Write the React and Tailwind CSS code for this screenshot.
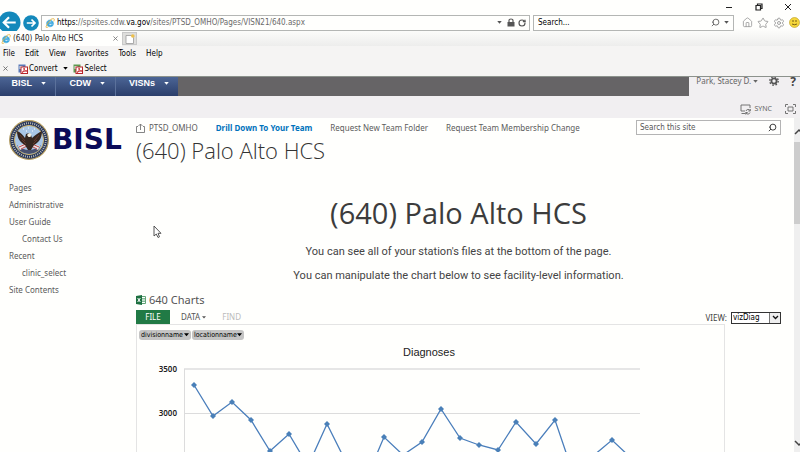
import React from 'react';
import { Home, Star, Settings, Lock, RotateCw, Search } from 'lucide-react';

function IELogo({ className }) {
  return (
    <svg viewBox="0 0 16 16" className={className} aria-hidden="true">
      <path d="M13.800 9.200H6c.2 2.600 3.600 3.200 4.600 1.300h3C11.500 16 2.500 15 2.500 8.500S12.500.5 13.800 9.200zM6 7.200h4.700C10.400 4.600 6.400 4.600 6 7.200z" fill="#35a5de" fillRule="evenodd" stroke="#35a5de" strokeWidth="0.800" />
      <path d="M3 11C0 16 2.500 16 5.500 14M9 2.500C13 .2 16.500 0 14 5.500M3 11Q4.500 6.500 10 2.500" fill="none" stroke="#e6b23c" strokeWidth="1.400" />
    </svg>
  );
}

function PdfIcon({ green }) {
  return (
    <svg viewBox="0 0 10 10" className="size-[10px] shrink-0" aria-hidden="true">
      <rect x="0.5" y="0.5" width="7" height="8" fill={green ? '#5c9a50' : '#5a78b8'} />
      <rect x="1.500" y="2" width="3" height="3" fill="#e8ece8" />
      <rect x="3" y="3" width="6.500" height="6.500" fill="#fff" stroke="#b8252c" />
      <path d="M4 8.500c2-1 2.500-3 2-4.500c0 2 1 3 3 3c-2 0-4 .5-5 1.500z" fill="none" stroke="#c4252c" strokeWidth="0.900" />
    </svg>
  );
}

function Caret({ className }) {
  return (
    <svg viewBox="0 0 6 4" className={className} aria-hidden="true">
      <path d="M0 0h6L3 3.500z" fill="currentColor" />
    </svg>
  );
}

function BrowserChrome() {
  return (
    <header className="shrink-0 border-b border-[#8c928c] bg-[#f5f4f3] font-['DejaVu_Sans_Condensed',sans-serif] text-black">
      <div className="bg-gradient-to-b from-[#fffffd] from-60% to-[#ededec]">
        <div className="flex h-[14px] items-center justify-end gap-[21px] pr-[8px]">
          <button aria-label="Minimize" className="flex size-[8px] items-center">
            <span className="h-px w-[6px] bg-[#222]" />
          </button>
          <button aria-label="Restore">
            <svg viewBox="0 0 8 8" className="size-[8px]" fill="none" stroke="#222" strokeWidth="1.200">
              <path d="M1 2.500h4.500V7H1zM2.500 2.500V1H7v4.500H5.500" />
            </svg>
          </button>
          <button aria-label="Close">
            <svg viewBox="0 0 8 8" className="size-[8px]" fill="none" stroke="#222">
              <path d="M1 1l6 6M7 1L1 7" />
            </svg>
          </button>
        </div>
        <div className="flex h-[17px] items-center">
          <button aria-label="Back" className="-ml-[2px] shrink-0">
            <svg viewBox="0 0 24 24" className="size-[23px]">
              <circle cx="12" cy="12" r="11.500" fill="#1489bb" />
              <path d="M18.500 12H6.500M11.500 6.500L6 12l5.500 5.500" fill="none" stroke="#fff" strokeWidth="2.300" />
            </svg>
          </button>
          <button aria-label="Forward" className="ml-[2px] shrink-0">
            <svg viewBox="0 0 16 16" className="size-[16px]">
              <circle cx="8" cy="8" r="7.800" fill="#1489bb" />
              <path d="M3.800 8h8M8.500 4.500L12 8l-3.500 3.500" fill="none" stroke="#fff" strokeWidth="1.700" />
            </svg>
          </button>
          <div className="ml-[2px] flex h-[16px] min-w-0 flex-1 items-center border border-[#b4b6b4] bg-[#fffffd] px-[3px]">
            <IELogo className="size-[10px] shrink-0" />
            <div className="ml-[2px] flex-1 truncate text-[8px] text-[#6a6a6a]">
              <span className="text-black">https:</span>//spsites.cdw.<span className="text-black">va.gov</span>/sites/PTSD_OMHO/Pages/VISN21/640.aspx
            </div>
            <div className="flex items-center gap-[3px] text-[#555]">
              <Caret className="mr-[2px] h-[3px] w-[5px]" />
              <svg viewBox="0 0 8 9" className="h-[9px] w-[8px]" aria-hidden="true">
                <rect x="0.500" y="4" width="7" height="4.500" fill="currentColor" />
                <path d="M2 4V2.500Q2 1 4 1T6 2.500V4" fill="none" stroke="currentColor" strokeWidth="1.200" />
              </svg>
              <RotateCw className="size-[8px]" strokeWidth={3.5} />
            </div>
          </div>
          <div className="ml-[3px] flex h-[16px] w-[201px] shrink-0 items-center border border-[#b4b6b4] bg-[#fffffd] px-[4px]">
            <input aria-label="Web search" placeholder="Search..." className="w-0 flex-1 bg-transparent text-[8px] outline-none placeholder:text-black" />
            <Search className="size-[9px] -scale-x-100 text-[#444]" />
            <Caret className="ml-[4px] h-[3px] w-[5px] text-[#555]" />
          </div>
          <div className="flex shrink-0 items-center gap-[4px] pl-[8px] text-[#999]">
            <Home className="size-[11px]" strokeWidth={1.8} />
            <Star className="size-[12px]" strokeWidth={1.8} />
            <Settings className="size-[12px]" strokeWidth={1.8} />
            <svg viewBox="0 0 11 11" className="size-[11px]">
              <circle cx="5.500" cy="5.500" r="5" fill="#f5d63a" stroke="#b89a20" strokeWidth="0.600" />
              <path d="M4 3v2M7 3v2M3 7q2.500 1.500 5 0" stroke="#6b5410" fill="none" strokeWidth="0.900" />
            </svg>
          </div>
        </div>
        <div className="flex h-[15px] items-stretch">
          <div className="flex w-[122px] items-center bg-[#fffffd] pr-[4px] pl-[1px]">
            <IELogo className="size-[10px]" />
            <span className="ml-[2px] flex-1 text-[8px] whitespace-nowrap text-[#222]">(640) Palo Alto HCS</span>
            <button aria-label="Close tab">
              <svg viewBox="0 0 6 6" className="size-[5px]" stroke="#777">
                <path d="M0.500 0.500l5 5M5.500 0.500l-5 5" />
              </svg>
            </button>
          </div>
          <button aria-label="New tab" className="my-[1px] flex w-[15px] items-center justify-center border border-[#c8c8c8] bg-[#dededc]">
            <svg viewBox="0 0 10 10" className="size-[10px]">
              <path d="M1 1.500h5.500l2 2V9.500H1z" fill="#fff" stroke="#999" strokeWidth="0.800" />
              <circle cx="7.800" cy="2" r="1.800" fill="#edc04c" />
            </svg>
          </button>
        </div>
      </div>
      <nav className="flex h-[15px] items-center gap-[10px] px-[3px] text-[8px]">
        <button>File</button>
        <button>Edit</button>
        <button>View</button>
        <button>Favorites</button>
        <button>Tools</button>
        <button>Help</button>
      </nav>
      <div className="flex h-[15px] items-center px-[3px] text-[8px]">
        <button aria-label="Close toolbar">
          <svg viewBox="0 0 6 6" className="size-[5px]" stroke="#666">
            <path d="M0.500 0.500l5 5M5.500 0.500l-5 5" />
          </svg>
        </button>
        <button className="ml-[10px] flex items-center gap-[1px]"><PdfIcon />Convert</button>
        <Caret className="ml-[6px] h-[3px] w-[5px]" />
        <button className="ml-[5px] flex items-center gap-[1px]"><PdfIcon green />Select</button>
      </div>
    </header>
  );
}

function Ribbon() {
  return (
    <div className="shrink-0 bg-[#f1eff1]">
      <div className="flex h-[19px] items-stretch">
        <nav className="flex bg-gradient-to-b from-[#4c6595] to-[#2b3e6b] font-['Liberation_Sans',sans-serif] text-[9px] font-bold text-white">
          <button className="flex w-[56px] items-start justify-end gap-[9px] border-r border-[#5b719b] pr-[9px]">BISL<Caret className="mt-[5px] h-[3px] w-[5px]" /></button>
          <button className="flex w-[60px] items-start justify-end gap-[9px] border-r border-[#5b719b] pr-[10px]">CDW<Caret className="mt-[5px] h-[3px] w-[5px]" /></button>
          <button className="flex w-[62px] items-start justify-end gap-[9px] pr-[9px]">VISNs<Caret className="mt-[5px] h-[3px] w-[5px]" /></button>
        </nav>
        <div className="flex-1 bg-[#666466]" />
        <div className="flex shrink-0 items-start gap-[11px] pr-[4px] pl-[7px] text-[#666]">
          <button className="flex h-[8px] items-center gap-[2px] text-[8px] leading-[8px] whitespace-nowrap">Park, Stacey D.<Caret className="h-[3px] w-[5px]" /></button>
          <button aria-label="Settings">
            <svg viewBox="0 0 10 10" className="size-[10px]" fill="none" stroke="#555">
              <circle cx="5" cy="4" r="2.600" strokeWidth="1.800" />
              <circle cx="5" cy="4" r="4.200" strokeWidth="1.400" strokeDasharray="1.650 1.650" />
            </svg>
          </button>
          <button className="text-[12px] leading-[9px] font-bold text-[#444]">?</button>
        </div>
      </div>
      <div className="flex h-[22px] items-center justify-end gap-[13px] pt-[4px] pr-[4px] text-[#666]">
        <button className="flex items-center gap-[3px] text-[7px]">
          <svg viewBox="0 0 11 11" className="size-[11px]" fill="none" stroke="currentColor" strokeWidth="0.900">
            <path d="M5 7H1V1h9v3M1.500 9.500H5" />
            <path d="M10 6.500a2.200 2.200 0 0 0-4 .5M6 9a2.200 2.200 0 0 0 4-.500M10.300 5v2h-2M5.700 10.500v-2h2" />
          </svg>
          SYNC
        </button>
        <button aria-label="Focus on content">
          <svg viewBox="0 0 11 10" className="h-[10px] w-[11px]" fill="none" stroke="currentColor" strokeWidth="0.900">
            <path d="M0.500 3V0.500H3M8 0.500h2.500V3M10.500 7v2.500H8M3 9.500H0.500V7M3 3h5v4H3z" />
          </svg>
        </button>
      </div>
    </div>
  );
}

function Seal() {
  return (
    <svg viewBox="0 0 40 40" className="size-[40px] shrink-0" role="img" aria-label="Department seal">
      <circle cx="20" cy="20" r="19.300" fill="#26345a" stroke="#b29a5c" strokeWidth="1.200" />
      <circle cx="20" cy="20" r="16.800" fill="none" stroke="#b4b8b4" strokeWidth="2" strokeDasharray="1 1.100" />
      <circle cx="20" cy="20" r="14.600" fill="#a9c6e6" stroke="#c9b06a" strokeWidth="1" />
      <path d="M8 25q12 10 24 0l-3 6q-9 6-18 0z" fill="#48506f" />
      <path d="M9 26l8-3 2 3-8 4zM31 26l-8-3-2 3 8 4z" fill="#e9e3e3" />
      <path d="M10 27l7-3M12 29l6-3M30 27l-7-3M28 29l-6-3" stroke="#b5343b" strokeWidth="0.900" />
      <path d="M8 11c0 8 4 12 8 14l3 5h3l3-5c4-2 8-6 8-14-4 2-7 4-10 7l-1-3-2-2-3 1-1 4c-2-3-5-6-8-7z" fill="#352620" />
      <path d="M11 15l5 6M30 15l-5 6M13 20l4 4M28 20l-4 4" stroke="#6e3a2c" strokeWidth="0.900" />
      <path d="M18 15l2-2 2.500 1-1 3h-2z" fill="#f2eee0" />
      <path d="M14 9h1M19 8h1M25 9h1M17 11h1M23 11h1" stroke="#fff" />
    </svg>
  );
}

const sideLinks = [
  { label: 'Pages' },
  { label: 'Administrative' },
  { label: 'User Guide' },
  { label: 'Contact Us', nested: true },
  { label: 'Recent' },
  { label: 'clinic_select', nested: true },
  { label: 'Site Contents' },
];

function Sidebar() {
  return (
    <aside className="w-[136px] shrink-0 pl-[9px]">
      <div className="flex items-center gap-[3px] pt-[2px]">
        <Seal />
        <span className="font-['DejaVu_Sans',sans-serif] text-[28px] leading-[40px] font-bold text-[#0b0b58]">BISL</span>
      </div>
      <nav className="mt-[19px] flex flex-col text-[8px] leading-[17px] text-[#5c5c5c]">
        {sideLinks.map((l) => (
          <a key={l.label} href="#" className={l.nested ? 'pl-[13px]' : ''}>{l.label}</a>
        ))}
      </nav>
    </aside>
  );
}

const points = [
  [58, 61], [77, 92], [96, 78], [115, 96], [134, 127], [153, 110], [172, 142], [191, 100],
  [210, 138], [229, 158], [248, 113], [267, 131], [286, 118], [305, 85], [324, 114], [343, 121],
  [362, 126], [380, 98], [400, 120], [419, 96], [438, 152], [457, 132], [476, 116], [495, 134],
];

function Chart() {
  return (
    <svg width="586" height="144" viewBox="1 16 586 144" className="block" role="img" aria-label="Diagnoses line chart">
      <text x="293" y="32" textAnchor="middle" className="fill-[#222] font-['Liberation_Sans',sans-serif] text-[11px]">Diagnoses</text>
      <g textAnchor="end" className="fill-[#222] font-['Noto_Sans',sans-serif] text-[8px] font-semibold">
        <text x="41" y="48">3500</text>
        <text x="41" y="92">3000</text>
      </g>
      <path d="M48 45H504" stroke="#e6e6e6" strokeWidth="2" />
      <path d="M48 89.500H504M48.500 45V160" stroke="#dcdcdc" />
      <polyline points={points.map((p) => p.join(',')).join(' ')} fill="none" stroke="#4a7ebb" strokeWidth="1.300" />
      {points.map(([x, y]) => (
        <path key={x} d={`M${x - 3} ${y}l3-3 3 3-3 3z`} fill="#4a80b8" />
      ))}
    </svg>
  );
}

function ChartPart() {
  return (
    <section className="mt-[3px]">
      <h2 className="flex items-center gap-[3px] text-[11px] leading-[17px] text-[#555]">
        <svg viewBox="0 0 10 10" className="size-[10px]" aria-hidden="true">
          <path d="M5 1.500h4.500v7H5z" fill="#fff" stroke="#4f9a68" strokeWidth="0.900" />
          <path d="M6 3.500h3M6 5h3M6 6.500h3" stroke="#4f9a68" strokeWidth="0.700" />
          <path d="M0 1l6-1v10l-6-1z" fill="#1d7040" />
          <path d="M1.700 3l2.600 4M4.300 3L1.700 7" stroke="#fff" strokeWidth="1" />
        </svg>
        640 Charts
      </h2>
      <div className="mt-[2px] flex h-[14px] items-center text-[8px]">
        <button className="h-[14px] w-[34px] bg-[#217a45] text-white">FILE</button>
        <button className="ml-[11px] flex items-center gap-[2px] text-[#555]">DATA<Caret className="h-[3px] w-[4px]" /></button>
        <button className="ml-[16px] text-[#bbb]">FIND</button>
        <div className="mt-[1px] ml-auto flex items-center gap-[4px] text-[#444]">
          <label htmlFor="view">VIEW:</label>
          <div className="flex h-[12px] w-[50px] items-stretch border border-[#333] bg-white">
            <select id="view" className="w-0 flex-1 appearance-none pl-[1px] font-['DejaVu_Sans_Condensed',sans-serif] text-[8px] leading-[10px] text-black">
              <option>vizDiag</option>
            </select>
            <span className="flex w-[11px] items-center justify-center border-l border-[#777] bg-[#eee]">
              <svg viewBox="0 0 7 5" className="h-[5px] w-[7px]" fill="none" stroke="#111" strokeWidth="1.300"><path d="M1 1l2.500 2.500L6 1" /></svg>
            </span>
          </div>
        </div>
      </div>
      <div className="mr-[56px] border border-[#e4e4e4]">
        <div className="flex gap-[1px] px-[2px] pt-[5px] font-['DejaVu_Sans_Condensed',sans-serif] text-[7px] leading-[10px] text-black">
          <button className="flex h-[10px] w-[52px] items-center justify-between rounded-[3px] bg-[#c4c4c4] px-[2px]">divisionname<Caret className="h-[4px] w-[5px]" /></button>
          <button className="flex h-[10px] w-[52px] items-center justify-between rounded-[3px] bg-[#c4c4c4] px-[2px]">locationname<Caret className="h-[4px] w-[5px]" /></button>
        </div>
        <Chart />
      </div>
    </section>
  );
}

function Main() {
  return (
    <main className="min-w-0 flex-1 pr-[13px]">
      <div className="flex items-center pt-[2px] text-[8px] text-[#5c5c5c]">
        <svg viewBox="0 0 9 10" className="h-[10px] w-[9px] shrink-0" fill="none" stroke="#777" strokeWidth="0.900" aria-hidden="true">
          <path d="M2 3.500H0.500v6h8v-6H7M4.500 7V1M2.500 3l2-2 2 2" />
        </svg>
        <a href="#" className="ml-[4px]">PTSD_OMHO</a>
        <a href="#" className="ml-[18px] font-bold text-[#0072bc]">Drill Down To Your Team</a>
        <a href="#" className="ml-[18px]">Request New Team Folder</a>
        <a href="#" className="ml-[18px]">Request Team Membership Change</a>
        <div className="ml-auto flex h-[15px] w-[145px] items-center border border-[#b4b4b4] px-[3px]">
          <input aria-label="Search this site" placeholder="Search this site" className="w-0 flex-1 bg-transparent font-['DejaVu_Sans_Condensed',sans-serif] text-[8px] outline-none placeholder:text-[#555]" />
          <Search className="size-[9px] -scale-x-100 text-[#333]" strokeWidth={2.5} />
        </div>
      </div>
      <div className="mt-[1px] font-['Open_Sans',sans-serif] text-[22px] leading-[28px] font-light text-[#333]">(640) Palo Alto HCS</div>
      <h1 className="mt-[29px] text-center font-['Open_Sans',sans-serif] text-[29px] leading-[40px] text-[#3c3c3c]">(640) Palo Alto HCS</h1>
      <p className="mt-[7px] text-center font-['Roboto',sans-serif] text-[11px] leading-[24px] text-[#444]">You can see all of your station's files at the bottom of the page.</p>
      <p className="text-center font-['Roboto',sans-serif] text-[11px] leading-[24px] text-[#444]">You can manipulate the chart below to see facility-level information.</p>
      <ChartPart />
    </main>
  );
}

export default function App() {
  return (
    <div className="relative flex h-screen flex-col overflow-hidden bg-[#fffffd] font-['Noto_Sans',sans-serif]">
      <BrowserChrome />
      <Ribbon />
      <div className="flex min-h-0 flex-1">
        <Sidebar />
        <Main />
        <div className="flex w-[6px] shrink-0 flex-col items-center bg-[#efefef]">
          <svg viewBox="0 0 6 24" className="h-[24px] w-[6px]" fill="none" stroke="#444" strokeWidth="1.500"><path d="M1 16l4-4 4 4" /></svg>
          <div className="h-[82px] w-full bg-[#cdcdcd]" />
          <svg viewBox="0 0 6 24" className="mt-auto h-[24px] w-[6px]" fill="none" stroke="#444" strokeWidth="1.500"><path d="M1 13l4 4 4-4" /></svg>
        </div>
      </div>
      <svg viewBox="0 0 9 13" className="pointer-events-none absolute top-[225px] left-[153px] h-[13px] w-[9px]">
        <path d="M1 1v10l2.300-2 1.700 3.500 1.500-.700L5 8.300h3z" fill="#fff" stroke="#444" strokeWidth="0.900" />
      </svg>
    </div>
  );
}
